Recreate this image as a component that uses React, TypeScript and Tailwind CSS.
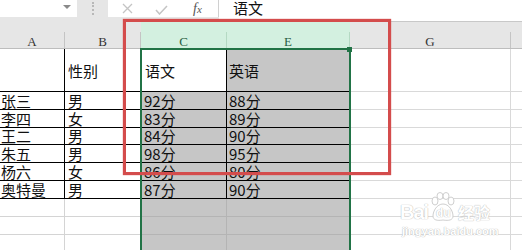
import React from "react";

type Row = {
  h: string;
  a?: string;
  b?: string;
  c?: string;
  e?: string;
  table: boolean;
  first?: boolean;
};

const rows: Row[] = [
  { h: "h-[43px]", b: "性别", c: "语文", e: "英语", table: true, first: true },
  { h: "h-[18px]", a: "张三", b: "男", c: "92分", e: "88分", table: true },
  { h: "h-[18px]", a: "李四", b: "女", c: "83分", e: "89分", table: true },
  { h: "h-[17px]", a: "王二", b: "男", c: "84分", e: "90分", table: true },
  { h: "h-[18px]", a: "朱五", b: "男", c: "98分", e: "95分", table: true },
  { h: "h-[18px]", a: "杨六", b: "女", c: "86分", e: "80分", table: true },
  { h: "h-[18px]", a: "奥特曼", b: "男", c: "87分", e: "90分", table: true },
  { h: "h-[18px]", table: false },
  { h: "h-[18px]", table: false },
  { h: "h-[18px]", table: false },
];

function HeaderCell({ label, width, active }: { label: string; width: string; active?: boolean }) {
  return (
    <div className={`flex h-full shrink-0 ${width} ${active ? "bg-[#d3f0e0] text-[#2a5d43]" : "text-[#333]"}`}>
      <div className="flex-1 flex items-end justify-center leading-[13px]">{label}</div>
      <div className={`w-px h-[16px] self-end ${active ? "bg-[#b4d9c3]" : "bg-[#c4c4c4]"}`} />
    </div>
  );
}

export default function App() {
  return (
    <div className="relative w-[522px] h-[250px] overflow-hidden bg-white font-['Noto_Sans_CJK_SC',sans-serif] text-[15px] text-[#111]">
      {/* Formula bar */}
      <div className="flex h-[22px] bg-[#e6e6e6]">
        <div className="w-[77px] h-[17px] bg-white flex justify-end pr-[6px] pt-[5px]">
          <div className="w-0 h-0 border-l-[4px] border-r-[4px] border-t-[4px] border-l-transparent border-r-transparent border-t-[#8a8a8a]" />
        </div>
        <div className="w-[31px] flex justify-center pt-[2px]">
          <div className="h-[13px] border-l-2 border-dotted border-[#b8b8b8]" />
        </div>
        <div className="w-[110px] h-[17px] bg-white flex items-center pl-[14px]">
          <svg width="11" height="11" viewBox="0 0 11 11" className="mb-[1px]">
            <path d="M1 1L10 10M10 1L1 10" stroke="#c4c4c4" strokeWidth="1.3" fill="none" />
          </svg>
          <svg width="13" height="10" viewBox="0 0 13 10" className="ml-[22px] mt-[3px]">
            <path d="M1 5L4.5 9L12 1" stroke="#c4c4c4" strokeWidth="1.5" fill="none" />
          </svg>
          <span className="ml-[25px] font-['Liberation_Serif',serif] italic text-[14px] leading-[14px] text-[#555]">
            f<span className="text-[11px]">x</span>
          </span>
        </div>
        <div className="w-px h-[17px] bg-[#d0d0d0]" />
        <div className="flex-1 h-[22px] bg-white border-b border-[#c8c8c8] overflow-hidden pl-[14px]">
          <div className="leading-[15px]">语文</div>
        </div>
      </div>

      {/* Column headers */}
      <div className="flex h-[27px] bg-[#e6e6e6] border-b border-[#bdbdbd] font-['Liberation_Serif',serif] text-[13px]">
        <HeaderCell label="A" width="w-[65px]" />
        <HeaderCell label="B" width="w-[76px]" />
        <HeaderCell label="C" width="w-[86px]" active />
        <HeaderCell label="E" width="w-[123px]" active />
        <HeaderCell label="G" width="w-[161px]" />
        <div className="flex-1" />
      </div>

      {/* Grid body */}
      {rows.map((r, i) => {
        const dark = r.table ? "border-black" : "border-[#d4d4d4]";
        const sel = r.table ? "border-black" : "border-[#b4b4b4]";
        const align = r.first ? "items-center pt-[2px]" : "items-center";
        return (
          <div key={i} className={`flex ${r.h} leading-[16px]`}>
            <div className={`w-[65px] shrink-0 flex ${align} border-b border-r ${dark} pl-[1px] whitespace-nowrap`}>{r.a}</div>
            <div className={`w-[76px] shrink-0 flex ${align} border-b ${dark} pl-[3px]`}>{r.b}</div>
            <div
              className={`w-[86px] shrink-0 flex ${align} border-b border-r ${sel} ${r.first ? "bg-white pl-[4px]" : "bg-[#c6c6c6] pl-[3px]"}`}
            >
              {r.c}
            </div>
            <div className={`w-[123px] shrink-0 flex ${align} border-b ${sel} bg-[#c6c6c6] pl-[2px]`}>{r.e}</div>
            <div className="w-[161px] shrink-0 border-b border-r border-[#d9d9d9]" />
            <div className="flex-1 border-b border-[#d9d9d9]" />
          </div>
        );
      })}

      {/* Selection frame */}
      <div className="absolute left-[140px] top-[48px] w-[211px] h-[210px] border-2 border-b-0 border-[#217346]" />
      <div className="absolute left-[347px] top-[47px] w-[5px] h-[5px] bg-[#217346]" />

      {/* Red annotation box */}
      <div className="absolute left-[123px] top-[19px] w-[268px] h-[156px] border-[3px] border-[#d44c4c] shadow-[0_0_1px_#d44c4c]" />

      {/* Watermark */}
      <div className="absolute left-[400px] top-[192px] w-[96px] h-[48px] text-white [text-shadow:0_0_1px_#bdbdbd,0_0_1px_#bdbdbd]">
        <div className="absolute left-0 top-[10px] font-['Liberation_Sans',sans-serif] font-bold text-[20px] leading-[20px] tracking-[-1px]">
          Bai
        </div>
        <svg width="26" height="30" viewBox="0 0 26 30" className="absolute left-[30px] top-0">
          <g fill="white" stroke="#cfcfcf" strokeWidth="1">
            <ellipse cx="5" cy="9" rx="3" ry="4" />
            <ellipse cx="10" cy="4" rx="3" ry="3.5" />
            <ellipse cx="16" cy="4" rx="3" ry="3.5" />
            <ellipse cx="21" cy="9" rx="3" ry="4" />
            <path d="M13 12C7 12 3 19 3 24C3 28 7 29 13 28C19 29 23 28 23 24C23 19 19 12 13 12Z" />
          </g>
        </svg>
        <div className="absolute left-[36px] top-[15px] font-['Liberation_Sans',sans-serif] font-bold text-[12px] leading-[12px]">du</div>
        <div className="absolute left-[58px] top-[11px] text-[16px] leading-[18px] font-bold">经验</div>
        <div className="absolute left-[2px] top-[33px] font-['Liberation_Sans',sans-serif] text-[11px] leading-[12px] font-bold whitespace-nowrap">
          jingyan.baidu.com
        </div>
      </div>
    </div>
  );
}
